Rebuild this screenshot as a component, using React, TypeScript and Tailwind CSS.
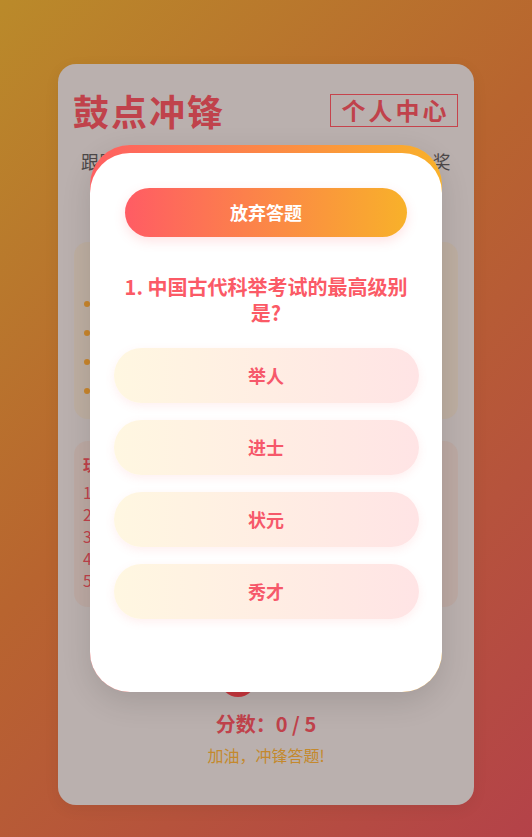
import React from "react";

const options = ["举人", "进士", "状元", "秀才"];

const rules = [
  "跟随鼓点节奏点击按钮答题",
  "每局共 5 道题目，限时作答",
  "答对一题得 1 分，答错不扣分",
  "得分越高，排名越靠前",
];

const ranks = ["1. 鼓王 - 5分", "2. 小鼓手 - 4分", "3. 冲锋者 - 4分", "4. 答题达人 - 3分", "5. 新手 - 2分"];

const App = () => {
  return (
    <div
      className="min-h-[837px] w-full flex justify-center pt-16 pb-8 bg-[linear-gradient(135deg,#ba8a2a_0%,#b8642f_45%,#b44249_100%)]"
      style={{ fontFamily: '"Noto Sans CJK SC", "Noto Sans", sans-serif' }}
    >
      <div className="w-[416px] h-[741px] rounded-[18px] bg-[#bab0ae] shadow-[0_4px_16px_rgba(0,0,0,0.06)] px-4 pt-6 flex flex-col">
        <div className="flex items-center justify-between">
          <h1 className="ml-[-1px] text-[36px] font-bold leading-[44px] text-[#c0424b] tracking-[2px]">鼓点冲锋</h1>
          <button className="h-[33px] w-[128px] border border-[#c6434c] pl-[3px] text-[24px] font-bold leading-none text-[#c0424b] tracking-[3px]">
            个人中心
          </button>
        </div>
        <p className="mt-[16px] text-center text-[18px] leading-[26px] text-[#4d4849] tracking-[0.5px]">
          跟随鼓点节奏，答对题目冲锋前进，赢取大奖
        </p>

        <div className="mt-[68px] h-[177px] rounded-[14px] bg-[#bdaea1] px-3 pt-[50px]">
          <ul className="flex flex-col gap-[8px] pl-[16px] list-disc marker:text-[#c8852b] text-[15px] leading-[21px] text-[#5a4f4b]">
            {rules.map((r) => (
              <li key={r}>{r}</li>
            ))}
          </ul>
        </div>

        <div className="mt-[22px] h-[166px] rounded-[14px] bg-[#bca9a3] px-[9px] pt-[11px]">
          <h2 className="text-[16px] font-bold leading-[24px] text-[#c0424b]">玩家排行榜</h2>
          <ul className="mt-[5px] text-[16px] leading-[22px] text-[#c0424b]">
            {ranks.map((r) => (
              <li key={r}>{r}</li>
            ))}
          </ul>
        </div>

        <div className="mt-[54px] flex justify-center">
          <div className="ml-[-56px] h-[36px] w-[36px] rounded-full bg-[#c7363d]" />
        </div>
        <div className="mt-[14px] text-center text-[20px] font-bold leading-[26px] text-[#c0424b]">分数：0 / 5</div>
        <div className="mt-[6px] text-center text-[16px] leading-[24px] text-[#c4892d]">加油，冲锋答题!</div>
      </div>

      <div className="fixed inset-0 flex items-center justify-center">
        <div className="w-[352px] h-[547px] rounded-[40px] bg-[linear-gradient(90deg,#ff5f62,#f9b12a)] pt-[8px] shadow-[0_10px_30px_rgba(0,0,0,0.12)]">
          <div className="h-full rounded-[40px] bg-white flex flex-col items-center pt-[35px] px-[23px]">
            <button className="h-[49px] w-[282px] rounded-full bg-[linear-gradient(90deg,#ff5c64,#f8b12a)] text-white text-[18px] font-bold shadow-[0_4px_12px_rgba(255,95,98,0.18)]">
              放弃答题
            </button>
            <h3 className="mt-[37px] text-center text-[20px] font-bold leading-[26px] text-[#fb5a66]">
              1. 中国古代科举考试的最高级别是?
            </h3>
            <div className="mt-[22px] w-[305px] flex flex-col gap-[17px]">
              {options.map((o) => (
                <button
                  key={o}
                  className="h-[55px] w-full rounded-full bg-[linear-gradient(90deg,#fff7e1,#ffe4e5)] text-[18px] font-bold text-[#f6586a] shadow-[0_3px_10px_rgba(255,120,120,0.12)]"
                >
                  {o}
                </button>
              ))}
            </div>
          </div>
        </div>
      </div>
    </div>
  );
};

export default App;
